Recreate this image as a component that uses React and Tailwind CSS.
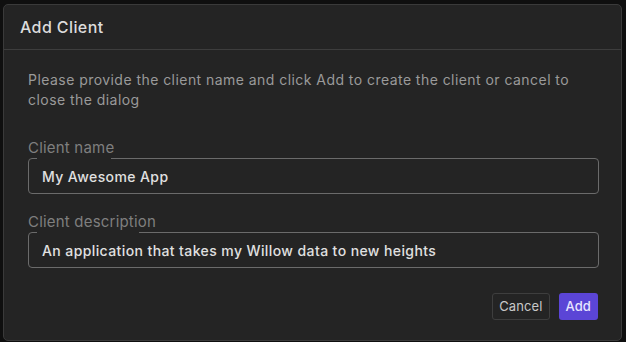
import React from "react";

function Field({ label, value, notch }) {
  return (
    <div className="flex flex-col">
      <label className="text-[15px] leading-[18px] text-[#7f7f7f] mb-[1px] tracking-[0.2px]">{label}</label>
      <div className="relative h-[36px] rounded-[4px] border border-[#6b6b6b] flex items-center px-[13px]">
        <span className={`absolute -top-[1px] left-[8px] h-[2px] bg-[#242424] ${notch}`} />
        <span className="text-[14px] font-medium tracking-[0.4px] text-[#e0e0e0]">{value}</span>
      </div>
    </div>
  );
}

export default function App() {
  return (
    <main
      className="h-screen w-screen bg-[#0f0f0f] pl-[3px] pt-[4px] pr-[4px] pb-[1px]"
      style={{ fontFamily: "Inter, 'Open Sans', sans-serif" }}
    >
      <div className="h-full w-full rounded-[5px] border border-[#3a3a3a] bg-[#242424] flex flex-col">
        <div className="h-[45px] flex items-center px-[16px] border-b border-[#3d3d3d]">
          <h2 className="text-[16px] font-medium tracking-[0.4px] text-[#dcdcdc]">Add Client</h2>
        </div>
        <div className="flex-1 flex flex-col pl-[24px] pr-[22px] pt-[20px]">
          <p className="text-[14px] leading-[20px] tracking-[0.45px] text-[#9a9a9a]">
            Please provide the client name and click Add to create the client or cancel to close the dialog
          </p>
          <div className="mt-[29px] flex flex-col gap-[19px]">
            <Field label="Client name" value="My Awesome App" notch="w-[74px]" />
            <Field
              label="Client description"
              value="An application that takes my Willow data to new heights"
              notch="w-[102px]"
            />
          </div>
          <div className="mt-[25px] flex justify-end gap-[9px] pr-[1px]">
            <button className="h-[27px] px-[6px] rounded-[3px] border border-[#3e3e3e] text-[13px] tracking-[0.1px] text-[#c8c8c8]">
              Cancel
            </button>
            <button className="h-[27px] px-[7px] rounded-[3px] bg-[#5b45d6] text-[13px] font-medium tracking-[0.1px] text-[#e8e4ff]">
              Add
            </button>
          </div>
        </div>
      </div>
    </main>
  );
}
